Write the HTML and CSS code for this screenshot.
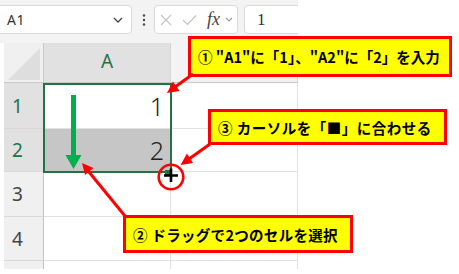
FILE: index.html
```html
<!DOCTYPE html>
<html lang="ja">
<head>
<meta charset="utf-8">
<link rel="stylesheet" href="styles.css">
</head>
<body>
<div class="page">
  <div class="excel">
    <div class="toolbar">
      <div class="namebox">
        <span class="nb-text">A1</span>
        <svg class="chev" viewBox="0 0 10 6" width="10" height="6"><polyline points="1,1 5,5 9,1" fill="none" stroke="#444" stroke-width="1.3"/></svg>
      </div>
      <div class="dots">
        <svg viewBox="0 0 4 12" width="4" height="12"><circle cx="2" cy="1.5" r="1.2" fill="#444"/><circle cx="2" cy="6" r="1.2" fill="#444"/><circle cx="2" cy="10.5" r="1.2" fill="#444"/></svg>
      </div>
      <div class="fxbox">
        <svg class="ic-x" viewBox="0 0 12 12" width="12" height="12"><path d="M1 1 L11 11 M11 1 L1 11" stroke="#c4c4c4" stroke-width="1.2" fill="none"/></svg>
        <svg class="ic-check" viewBox="0 0 15 12" width="15" height="12"><polyline points="1,6 5.5,10.5 14,1.5" stroke="#c4c4c4" stroke-width="1.2" fill="none"/></svg>
        <span class="fx">fx</span>
        <svg class="chev-sm" viewBox="0 0 8 5" width="8" height="5"><polyline points="1,1 4,4 7,1" fill="none" stroke="#9a9a9a" stroke-width="1.1"/></svg>
      </div>
      <div class="formula">1</div>
    </div>
    <div class="grid">
      <div class="corner"><svg viewBox="0 0 40 40" width="40" height="40"><polygon points="4,37 36,5 36,37" fill="#dedede"/></svg></div>
      <div class="colhead sel">A</div>
      <div class="colhead">&nbsp;</div>

      <div class="rowhead sel">1</div>
      <div class="cell active">1</div>
      <div class="cell"></div>

      <div class="rowhead sel">2</div>
      <div class="cell range">2</div>
      <div class="cell"></div>

      <div class="rowhead">3</div>
      <div class="cell"></div>
      <div class="cell"></div>

      <div class="rowhead">4</div>
      <div class="cell"></div>
      <div class="cell"></div>

      <div class="rowhead last"></div>
      <div class="cell last"></div>
      <div class="cell last"></div>

      <div class="selection"></div>
    </div>
  </div>

  <div class="callout c1">① "A1"に「1」、"A2"に「2」を入力</div>
  <div class="callout c3">③ カーソルを「■」に合わせる</div>
  <div class="callout c2">② ドラッグで2つのセルを選択</div>

  <svg class="overlay" viewBox="0 0 459 274" width="459" height="274">
    <rect x="71" y="95" width="5" height="61" fill="#00b050"/>
    <polygon points="65.5,155 81.5,155 73.5,169" fill="#00b050"/>
    <g stroke="#ff0000" stroke-width="3" fill="none">
      <line x1="193" y1="74" x2="175" y2="87"/>
      <line x1="210" y1="144" x2="189" y2="159"/>
      <line x1="125" y1="216" x2="89" y2="172"/>
    </g>
    <g fill="#ff0000">
      <polygon points="167,93 179.5,91 173,81.5"/>
      <polygon points="180.5,165 193,163 187,153.5"/>
      <polygon points="82,163 93.5,168 85,175"/>
    </g>
    <rect x="165" y="170" width="7" height="5" fill="#217346"/>
    <path d="M164 175.5 H178 M171 168.5 V182" stroke="#000" stroke-width="2.6" fill="none"/>
    <circle cx="171" cy="177" r="12.3" stroke="#ff0000" stroke-width="2.6" fill="none"/>
  </svg>
</div>
</body>
</html>
```

FILE: styles.css
```css
html, body {
  margin: 0;
  padding: 0;
  background: #ffffff;
}

.page {
  position: relative;
  width: 459px;
  height: 274px;
  overflow: hidden;
  font-family: "Noto Sans", "Liberation Sans", sans-serif;
}

.excel {
  width: 298px;
  overflow: hidden;
}

.toolbar {
  height: 43px;
  box-sizing: border-box;
  padding-top: 5px;
  background: #f3f3f3;
  display: flex;
  align-items: flex-start;
}

.namebox {
  flex: none;
  margin-left: -4px;
  width: 136px;
  height: 29px;
  box-sizing: border-box;
  background: #fff;
  border: 1px solid #d9d9d9;
  border-radius: 4px;
  display: flex;
  align-items: center;
  padding-left: 10px;
  padding-right: 4px;
}

.nb-text {
  flex: 1;
  font-size: 14px;
  color: #333;
  font-family: "Noto Sans", sans-serif;
  letter-spacing: 0.5px;
}

.chev {
  margin-right: 4px;
}

.dots {
  flex: none;
  width: 22px;
  height: 29px;
  display: flex;
  align-items: center;
  justify-content: center;
  padding-left: 1px;
  box-sizing: border-box;
}

.fxbox {
  flex: none;
  width: 84px;
  height: 29px;
  box-sizing: border-box;
  background: #fff;
  border: 1px solid #d9d9d9;
  border-radius: 4px;
  display: flex;
  align-items: center;
  padding-left: 5px;
}

.ic-check {
  margin-left: 10px;
}

.fx {
  margin-left: 10px;
  font-family: "Liberation Serif", serif;
  font-style: italic;
  font-size: 18px;
  color: #444;
  line-height: 1;
  padding-bottom: 2px;
}

.chev-sm {
  margin-left: 5px;
}

.formula {
  flex: none;
  width: 120px;
  margin-left: 6px;
  height: 29px;
  box-sizing: border-box;
  background: #fff;
  border: 1px solid #d9d9d9;
  border-radius: 4px;
  padding-left: 12px;
  font-family: "Liberation Serif", serif;
  font-size: 17px;
  color: #333;
  line-height: 27px;
}

.grid {
  position: relative;
  margin-left: 4px;
  width: 294px;
  display: grid;
  grid-template-columns: 40px 127px 127px;
  grid-template-rows: 40px 46px 43px 45px 44px 8px;
}

.corner {
  background: #f0f0f0;
  border-right: 1px solid #c8c8c8;
  border-bottom: 1px solid #c8c8c8;
  box-sizing: border-box;
  overflow: hidden;
}

.corner svg {
  display: block;
}

.colhead {
  background: #f3f3f3;
  border-right: 1px solid #d4d4d4;
  border-bottom: 1px solid #c8c8c8;
  box-sizing: border-box;
  display: flex;
  align-items: center;
  justify-content: center;
  font-size: 19px;
  color: #444;
  padding-bottom: 3px;
}

.colhead.sel {
  background: #e1e1e1;
  color: #217346;
}

.rowhead {
  background: #f0f0f0;
  border-right: 1px solid #c4c4c4;
  border-bottom: 1px solid #d8d8d8;
  box-sizing: border-box;
  display: flex;
  align-items: center;
  padding-left: 8px;
  font-size: 19px;
  color: #444;
}

.rowhead.sel {
  background: #e1e1e1;
  color: #217346;
}

.cell {
  border-right: 1px solid #e1e1e1;
  border-bottom: 1px solid #e1e1e1;
  box-sizing: border-box;
  display: flex;
  align-items: center;
  justify-content: flex-end;
  padding-right: 6px;
  font-size: 25px;
  color: #222;
  font-weight: 300;
}

.cell.range {
  background: #c6c6c6;
}

.rowhead.last,
.cell.last {
  border-bottom: none;
}

.selection {
  position: absolute;
  grid-row: 2 / 4;
  grid-column: 2 / 3;
  top: 0;
  left: -1px;
  right: -1px;
  bottom: -1px;
  border: 2px solid #217346;
  pointer-events: none;
}

.callout {
  position: absolute;
  box-sizing: border-box;
  background: #ffff00;
  border: 3px solid #ff0000;
  display: flex;
  align-items: center;
  padding-left: 7px;
  font-family: "Noto Sans CJK JP", sans-serif;
  font-weight: 700;
  font-size: 14.5px;
  color: #000;
  white-space: nowrap;
}

.c1 {
  left: 188px;
  top: 36px;
  width: 264px;
  height: 41px;
}

.c2 {
  left: 123px;
  top: 215px;
  width: 230px;
  height: 38px;
  letter-spacing: 0.3px;
}

.c3 {
  left: 208px;
  top: 109px;
  width: 239px;
  height: 36px;
  letter-spacing: 0.5px;
}

.overlay {
  position: absolute;
  left: 0;
  top: 0;
  pointer-events: none;
}
```
